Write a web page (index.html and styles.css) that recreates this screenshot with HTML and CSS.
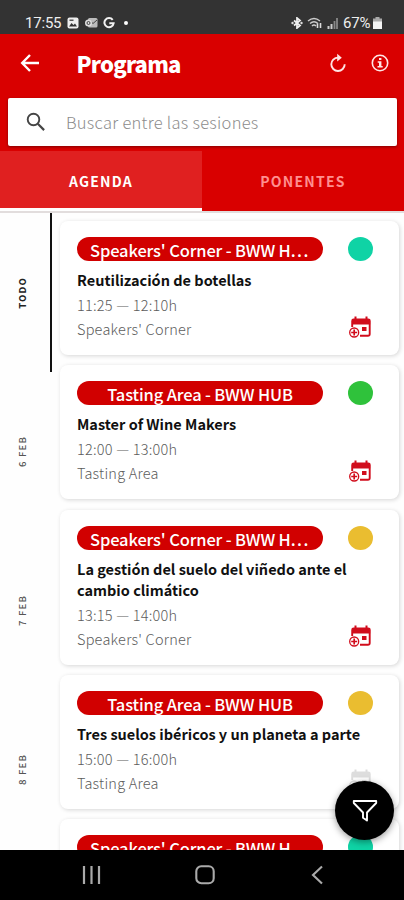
FILE: index.html
```html
<!DOCTYPE html>
<html lang="es">
<head>
    <meta charset="UTF-8">
    <meta name="viewport" content="width=device-width, initial-scale=1.0">
    <title>Programa</title>
    <link rel="stylesheet" href="styles.css">
</head>
<body>

    <!-- Iconos compartidos -->
    <svg class="sprite" width="0" height="0">
        <symbol id="calendario" viewBox="0 0 24 24">
            <path d="M4.2 4.5h18v5h-18z" fill="currentColor"/>
            <path d="M7.5 1.5v4M18.5 1.5v4" stroke="currentColor" stroke-width="2"/>
            <path d="M4.2 12V6q0-1.500 1.500-1.500h14.500q1.500 0 1.500 1.500v13q0 1.800-1.800 1.800H12" fill="none" stroke="currentColor" stroke-width="1.900"/>
            <path d="M14 12h4.500v4H14z" fill="currentColor"/>
            <circle cx="6.200" cy="17.500" r="4.500" fill="#fff" stroke="currentColor" stroke-width="1.300"/>
            <path d="M6.200 14.500v6M3.200 17.500h6" stroke="currentColor" stroke-width="1.700"/>
        </symbol>
    </svg>

    <div class="app">
        <div class="status">
            <div class="status-left">
                <span class="hora">17:55</span>
                <svg width="12" height="12" viewBox="0 0 12 12"><rect x=".5" y=".5" width="11" height="11" rx="2" fill="#eee"/><path d="M2 9.500l2.500-3.500 2 2 1.500-1.500 2 3z" fill="#333"/><rect x="2.500" y="2.500" width="4" height="1.500" fill="#555"/></svg>
                <svg width="14" height="12" viewBox="0 0 14 12"><rect x="4" y="1" width="9.500" height="9.500" rx="1.500" fill="#bbb"/><path d="M5 3l4 3.500L13 3" fill="none" stroke="#444"/><circle cx="4.500" cy="6" r="3.500" fill="#ddd"/><circle cx="4.500" cy="6" r="1.500" fill="none" stroke="#444"/></svg>
                <svg width="12" height="12" viewBox="0 0 12 12"><path d="M9.700 2.800A4.600 4.600 0 1 0 10.600 6.300H6.300" fill="none" stroke="#f2f2f2" stroke-width="2"/></svg>
                <i class="punto"></i>
            </div>
            <div class="status-right">
                <svg width="12" height="12" viewBox="0 0 12 12"><path d="M3 3.500l6 5L6 11V1l3 2.500-6 5" fill="none" stroke="#eee" stroke-width="1.800"/><circle cx="1.500" cy="6" r="1.200" fill="#ddd"/><circle cx="10.500" cy="6" r="1.200" fill="#ddd"/></svg>
                <svg width="16" height="12" viewBox="0 0 16 12"><path d="M1 4q6-5 12 0M3 6.500q4-3.500 8 0M5 9q2-2 4 0" fill="none" stroke="#ccc" stroke-width="1.400"/><path d="M10.500 11V6.500M13.500 6v5" stroke="#ddd" stroke-width="1.600"/></svg>
                <svg width="11" height="12" viewBox="0 0 11 12"><path d="M1.500 12V9M4.500 12V7" stroke="#ccc" stroke-width="2"/><path d="M7.500 12V4M10 12V1" stroke="#888" stroke-width="1.800"/></svg>
                <span class="bateria">67%</span>
                <svg width="9" height="12" viewBox="0 0 9 12"><path d="M2.500 0h4v1.500H9V6H0V1.500h2.500z" fill="#aaa"/><path d="M0 4.500h9V12H0z" fill="#f4f4f4"/></svg>
            </div>
        </div>

        <div class="header">
            <svg class="volver" width="20" height="20" viewBox="0 0 20 20"><path d="M19 10H2.500M10 2L2.200 10l7.800 8" fill="none" stroke="#fff" stroke-width="2.400"/></svg>
            <h1>Programa</h1>
            <svg class="recargar" width="18" height="20" viewBox="0 0 18 20"><path d="M9 4.600a6.700 6.700 0 1 0 6.700 6.700" fill="none" stroke="#ffe5e5" stroke-width="1.900"/><path d="M8.200.8l4.600 3.900-4.600 3.900z" fill="#ffe5e5"/></svg>
            <svg width="18" height="18" viewBox="0 0 18 18"><circle cx="9" cy="9" r="7.700" fill="none" stroke="#ffe5e5" stroke-width="1.600"/><path d="M8 4h2.400v2H8zM6.700 7.300h3.700v4.800h1.300v1.500H6.500v-1.500H8V8.800H6.700z" fill="#ffe5e5"/></svg>
        </div>

        <div class="buscador">
            <svg width="20" height="20" viewBox="0 0 20 20"><circle cx="7.500" cy="7.500" r="5.800" fill="none" stroke="#444" stroke-width="1.900"/><path d="M11.800 11.800l6.300 6.300" stroke="#444" stroke-width="2.200"/></svg>
            <span>Buscar entre las sesiones</span>
        </div>

        <div class="tabs">
            <div class="tab activa">AGENDA</div>
            <div class="tab">PONENTES</div>
        </div>

        <div class="contenido">
            <div class="dias">
                <div class="dia actual"><span>TODO</span></div>
                <div class="dia"><span>6 FEB</span></div>
                <div class="dia"><span>7 FEB</span></div>
                <div class="dia"><span>8 FEB</span></div>
            </div>

            <div class="sesiones">
                <div class="sesion">
                    <div class="fila">
                        <div class="sala">Speakers' Corner - BWW H<span class="puntos">...</span></div>
                        <i class="color turquesa"></i>
                    </div>
                    <h2>Reutilización de botellas</h2>
                    <div class="pie">
                        <div><p>11:25 — 12:10h</p><p class="lugar">Speakers' Corner</p></div>
                        <svg class="agregar"><use href="#calendario"/></svg>
                    </div>
                </div>

                <div class="sesion">
                    <div class="fila">
                        <div class="sala">Tasting Area - BWW HUB</div>
                        <i class="color verde"></i>
                    </div>
                    <h2>Master of Wine Makers</h2>
                    <div class="pie">
                        <div><p>12:00 — 13:00h</p><p class="lugar">Tasting Area</p></div>
                        <svg class="agregar"><use href="#calendario"/></svg>
                    </div>
                </div>

                <div class="sesion">
                    <div class="fila">
                        <div class="sala">Speakers' Corner - BWW H<span class="puntos">...</span></div>
                        <i class="color amarillo"></i>
                    </div>
                    <h2>La gestión del suelo del viñedo ante el cambio climático</h2>
                    <div class="pie">
                        <div><p>13:15 — 14:00h</p><p class="lugar">Speakers' Corner</p></div>
                        <svg class="agregar"><use href="#calendario"/></svg>
                    </div>
                </div>

                <div class="sesion">
                    <div class="fila">
                        <div class="sala">Tasting Area - BWW HUB</div>
                        <i class="color amarillo"></i>
                    </div>
                    <h2>Tres suelos ibéricos y un planeta a parte</h2>
                    <div class="pie">
                        <div><p>15:00 — 16:00h</p><p class="lugar">Tasting Area</p></div>
                        <svg class="agregar inactivo"><use href="#calendario"/></svg>
                    </div>
                </div>

                <div class="sesion">
                    <div class="fila">
                        <div class="sala">Speakers' Corner - BWW H<span class="puntos">...</span></div>
                        <i class="color turquesa"></i>
                    </div>
                </div>
            </div>

            <!-- Botón flotante de filtros -->
            <div class="filtro">
                <svg width="26" height="24" viewBox="0 0 26 24"><path d="M1.800 2h22.400v2L15 13.500v8l-4-2.800v-5.200L1.800 4z" fill="none" stroke="#fff" stroke-width="1.900" stroke-linejoin="round"/></svg>
            </div>
        </div>

        <div class="nav">
            <svg width="20" height="20" viewBox="0 0 20 20"><path d="M2 1v18M9.500 1v18M17 1v18" stroke="#aaa" stroke-width="2.200"/></svg>
            <svg width="20" height="20" viewBox="0 0 20 20"><rect x="1.300" y="1.300" width="17.400" height="17" rx="5" fill="none" stroke="#aaa" stroke-width="2.100"/></svg>
            <svg width="20" height="20" viewBox="0 0 20 20"><path d="M14 1.500L5 10l9 8.500" fill="none" stroke="#aaa" stroke-width="2.100"/></svg>
        </div>
    </div>

</body>
</html>
```
FILE: styles.css
```css
* {
    box-sizing: border-box;
}

body {
    font-family: 'Noto Sans CJK JP', 'Noto Sans CJK SC', sans-serif;
    background-color: #fff;
    margin: 0;
}

h1, h2, p {
    margin: 0;
}

.sprite {
    display: block;
}

.app {
    display: flex;
    flex-direction: column;
    height: 900px;
    overflow: hidden;
    background-color: #d90000;
}

.status {
    display: flex;
    justify-content: space-between;
    height: 34px;
    padding: 13px 22px 0 25px;
    background-color: #333;
    color: #eee;
    font-family: Roboto, sans-serif;
    font-size: 15px;
    line-height: 20px;
}

.status-left, .status-right {
    display: flex;
    align-items: center;
    height: 20px;
}

.status-left {
    gap: 5px;
}

.status-right {
    gap: 4px;
}

.hora {
    width: 37px;
    letter-spacing: -0.2px;
    white-space: nowrap;
}

.bateria {
    width: 28px;
    margin: 0 -2px 0 1px;
    letter-spacing: -0.2px;
}

.punto {
    width: 4px;
    height: 4px;
    margin-left: 4px;
    border-radius: 50%;
    background-color: #fff;
}

.header {
    display: flex;
    align-items: center;
    height: 64px;
    padding: 0 15px 6px 20px;
    color: #fff;
}

.header h1 {
    flex: 1;
    margin-left: 36.5px;
    font-size: 22px;
    font-weight: 900;
    letter-spacing: -0.8px;
    line-height: 30px;
}

.recargar {
    margin-right: 24px;
}

.buscador {
    display: flex;
    align-items: center;
    height: 48px;
    margin: 0 7px 5px 8px;
    padding: 0 18px 1px;
    border-radius: 2px;
    background-color: #fff;
    box-shadow: 0 1px 3px rgba(0, 0, 0, 0.4);
    color: #8c8c8c;
    font-size: 16.5px;
    font-weight: 300;
    letter-spacing: 0.28px;
}

.buscador span {
    margin-left: 20px;
}

.tabs {
    display: flex;
    height: 60px;
}

.tab {
    flex: 1;
    border-bottom: 3px solid #d90000;
    color: #ff8f8f;
    font-size: 14px;
    font-weight: bold;
    letter-spacing: 1.2px;
    line-height: 60px;
    text-align: center;
}

.tab.activa {
    background-color: #e02020;
    border-bottom-color: #fff;
    color: #fff;
}

.contenido {
    display: flex;
    flex: 1;
    min-height: 0;
    position: relative;
    overflow: hidden;
    background-color: #fefefe;
    border-top: 2px solid #e2dddd;
}

.dias {
    width: 52px;
    flex-shrink: 0;
}

.dia {
    display: flex;
    align-items: center;
    justify-content: center;
    height: 159px;
    padding-right: 6px;
    border-right: 2px solid transparent;
    color: #555;
    font-size: 9.5px;
    font-weight: 500;
    letter-spacing: 1.2px;
    line-height: 14px;
}

.dia span {
    writing-mode: vertical-rl;
    transform: rotate(180deg);
}

.dia.actual {
    border-right-color: #111;
    color: #222;
    font-weight: bold;
}

.sesiones {
    display: flex;
    flex: 1;
    flex-direction: column;
    gap: 10.3px;
    padding: 8px 5px 0 8px;
}

.sesion {
    flex-shrink: 0;
    padding: 16px 26px 14px 17px;
    border-radius: 8px;
    background-color: #fff;
    box-shadow: 1px 1px 4px rgba(0, 0, 0, 0.16);
}

.fila, .pie {
    display: flex;
    align-items: center;
    justify-content: space-between;
}

.sala {
    width: 246px;
    height: 24px;
    overflow: hidden;
    border-radius: 12px;
    background-color: #d10000;
    color: #fff;
    font-size: 16.5px;
    font-weight: 500;
    letter-spacing: -0.15px;
    line-height: 26px;
    text-align: center;
    white-space: nowrap;
}

.puntos {
    letter-spacing: 1.5px;
}

.color {
    width: 25px;
    height: 24px;
    border-radius: 50%;
}

.turquesa {
    background-color: #0fd3a5;
}

.verde {
    background-color: #2fc23b;
}

.amarillo {
    background-color: #eabd30;
}

.sesion h2 {
    margin-top: 8px;
    color: #111;
    font-size: 14.5px;
    line-height: 21px;
}

.pie {
    margin-top: 3px;
    color: #5c5c5c;
    font-size: 14.5px;
    font-weight: 300;
    letter-spacing: 0.22px;
    line-height: 24px;
}

.agregar {
    width: 24px;
    height: 24px;
    margin: 19px 1px 0 0;
    color: #d10d1c;
}

.inactivo {
    color: #ddd;
}

.filtro {
    position: absolute;
    right: 10px;
    bottom: 10px;
    display: flex;
    align-items: center;
    justify-content: center;
    width: 59px;
    height: 59px;
    border-radius: 50%;
    background-color: #000;
    box-shadow: 0 2px 7px rgba(0, 0, 0, 0.4);
}

.nav {
    display: flex;
    justify-content: space-between;
    height: 50px;
    padding: 15px 76px 0 82px;
    background-color: #000;
}
```
